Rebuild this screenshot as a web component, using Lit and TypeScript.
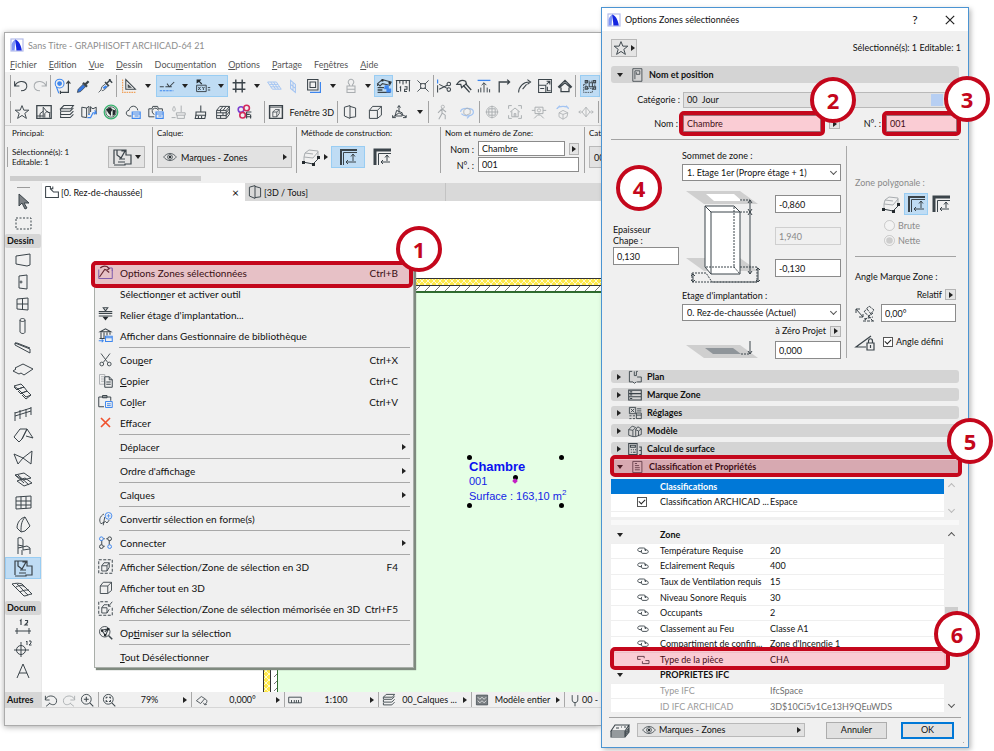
import { LitElement, html, svg, css, nothing, TemplateResult } from "lit";
import { customElement, property } from "lit/decorators.js";
import { classMap } from "lit/directives/class-map.js";

/* Line drawings on a 20 x 20 grid. Classes: b = blue line, g = grey line, f = solid, bf = solid blue. */
const ICONS: Record<string, any> = {
  undo: svg`<path d="M2 4v6h6M2.500 10C5 3 15 3 17 8c1.500 5-2 8-7 8" stroke-width="1.300"/>`,
  redo: svg`<path class="g" d="M18 4v6h-6M17.500 10C15 3 5 3 3 8c-1.500 5 2 8 7 8" stroke-width="1.300"/>`,
  find: svg`<circle class="b" cx="7" cy="7" r="5.500" stroke-width="1.300"/><circle class="bf" cx="7" cy="7" r="3"/><path class="b" d="M3 11l3 8" stroke-width="1.300"/><path d="M8 18h10V4M15.500 7L18 4l2.500 3M8 16v4" stroke-width="1.500"/>`,
  pipette: svg`<path d="M10 6l5 5M13 8l4-4" stroke-width="2.800"/><path d="M3 18l1-4 6-6 3 3-6 6z" fill="#3478e5"/>`,
  syringe: svg`<path d="M10 5l5 5M12 7l5-5M15 2l4 4" stroke-width="1.800"/><path d="M2 18l3-3 1-4 5-4 3 3-5 5-3 1"/><path class="bf" d="M7 12l4-3 2 2-4 3z"/>`,
  setsquare: svg`<path class="o" d="M2 2v16h16" stroke-dasharray="2 1" stroke-width="1.500"/><path d="M6 2v12h12zM9 9v2.500h3z" stroke-width="1.300"/>`,
  guide: svg`<path d="M1 11h5M8 11h8M10 7l3 4 6-6" stroke-width="1.300"/><path class="b" d="M1 16h17" stroke-dasharray="3 1" stroke-width="1.300"/>`,
  tracker: svg`<path class="f" d="M2 2h6L6 4l3 3-1 1-3-3-3 2z"/><path d="M2 9h12v8H2zM4 11l3 4M7 11l-3 4M9 11l1.500 2 1.500-2M10.500 13v2M16 12h3M16 15h3" stroke-width="1.200"/>`,
  grid: svg`<path d="M6 2v16M14 2v16M2 6h16M2 14h16" stroke-width="1.800"/>`,
  plane: svg`<path class="bl" d="M2 5h11l6 9H8zM4 8h11M6 11h11M6 5l6 9M9.500 5l6 9" stroke-width="1.200"/>`,
  vplane: svg`<path class="bl" d="M7 3l6 5v10l-6-5zM10 5.500v10M7 8l6 5" stroke-width="1.300"/>`,
  box: svg`<path d="M2 2h13v13H2zM5 5h7v7H5z" stroke-width="1.300"/><path class="b" d="M5 18h13V5" stroke-width="1.500"/>`,
  stamp: svg`<path class="g" d="M5 10h10v8H5zM8 10V8a3.500 3.500 0 1 1 4 0v2M5 14h10" stroke-width="1.300"/>`,
  roof: svg`<path d="M2 7l6-5 11 3-2 4-9-2-3 3zM2 7v3" stroke-width="1.400"/><circle class="f" cx="8" cy="3" r="1.500"/><circle class="f" cx="17" cy="6" r="1.500"/><path d="M2 12h8M2 15h6M2 18h16" stroke-width="1.800"/><path class="bf" d="M11 9h5v4h3v5h-6v-4h-3z"/>`,
  ruler: svg`<path d="M1 3h18M2 3v14M18 3v14M6 3v4M10 3v5M14 3v4M6 12l1-1v6M12 11h3v3h-3v3h3M2 17h3" stroke-width="1.300"/>`,
  cross: svg`<path d="M3 3l5 5M17 3l-5 5M3 17l5-5M17 17l-5-5M7 7h6v6H7z" stroke-width="1.100"/>`,
  split: svg`<path class="b" d="M2 2v5" stroke-width="1.500"/><path d="M2 9v9M4 8l10 5M4 14l10-5" stroke-width="1.300"/><circle cx="16" cy="7.500" r="2.200" stroke-width="1.300"/><circle cx="16" cy="14.500" r="2.200" stroke-width="1.300"/>`,
  axe: svg`<path d="M1 8c3-5 7-6 11-4l1 3-6 5-1-4z" stroke-width="1.500"/><path d="M9 9l8 9M12 7l7 8" stroke-width="1.700"/>`,
  adjust: svg`<path class="b" d="M2 3h16" stroke-width="1.600"/><path d="M10 18V6M7 9l3-3 3 3M6 12v6M14 12v6M3 14v4M17 14v4" stroke-width="1.200"/>`,
  corner: svg`<path d="M4 18V5h12M14 2l3 3-3 3" stroke-width="1.600"/>`,
  fillet: svg`<path d="M2 18C2 11 8 5 15 5M13 2l4 3-4 3M7 14l5-6" stroke-width="1.300"/>`,
  resize: svg`<path d="M2 2h16v16H2zM2 9h9v9M12 8l4-4M12 4h4v4M4 13h5M13 11v5h4" stroke-width="1.300"/>`,
  house: svg`<path d="M2 11l8-8 8 8-1 1-7-6-7 6zM5 12v5h10v-5" stroke-width="1.600"/>`,
  group: svg`<path d="M5 4h11v9H5zM2 8v10h11v-5M2 8h3" stroke-dasharray="2 1"/><path d="M4 3h3v3H4zM14 3h3v3h-3zM4 11h3v3H4zM14 11h3v3h-3zM9 6h4v5H9z" stroke-width="1.300"/>`,
  star: svg`<path d="M10 2l2.300 5.700h6.200l-5 4 2 6.300L10 14.300 4.500 18l2-6.300-5-4h6.200z" stroke-width="1.200"/>`,
  frame: svg`<path d="M1 2h18v16H1z" stroke-width="1.600"/><path d="M9 17V4l5 6 4 1M5 17v-5l4-3M11 17v-5l3-3 3 3v5M1 15h8" stroke-width="1.200"/>`,
  layers: svg`<path d="M6 2h12l-3 4H2zM2 6v3h12l4-4M2 10v3h12l4-4M2 14v3h12l4-4" stroke-width="1.300"/>`,
  navigator: svg`<path d="M1 4l6 1v12l-6-1zM7 5l3-2v10M12 3v7M12 4l3 2 4-2v9" stroke-width="1.200"/><path class="b" d="M8 17h4l3-6h3M17 8l2 3-3 2M9 13h2" stroke-width="1.400"/>`,
  globe: svg`<circle cx="10" cy="10" r="8.500" stroke="#39b16f" stroke-width="1.600" fill="#e6f3ea"/><circle cx="10" cy="10" r="6.500"/><path class="f" d="M4 7l5-3 3 3-2 3 0 5-3-3zM12 7l4 1-1 5-3 2z"/>`,
  cloud: svg`<path d="M8 15H5c-5-1-4-7 0-7 1-7 10-7 11 0" stroke-width="1.200"/><path class="b" d="M9 10h10v8H9zM9 12.500h10M12 15h5" stroke-width="1.400"/>`,
  camera: svg`<path d="M8 16H1V6h4l1-3h6l1 3h5v3M8 13a4 4 0 1 1 5-5" stroke-width="1.200"/><path class="b" d="M10 10h9v8h-9zM10 12.500h9M13 15h4" stroke-width="1.400"/>`,
  brushdrop: svg`<path class="g" d="M5 3c3 4 1 6 0 6s-3-2 0-6M14 2v8M8 11h11v3H8zM9 14v4h9v-4M2 17h5" stroke-width="1.200"/>`,
  brush: svg`<path d="M11 2v8M5 10h12v4l-1 4H4l1-4zM4 14h13M8 15v3M12 15v3" stroke-width="1.300"/>`,
  bricks: svg`<path d="M2 8h12v10H2zM2 8l4-5h12l-4 5M18 3v10l-4 5M2 11h12l4-5M2 14.500h12l4-5M7 8v3M10 11v3M7 14v4M10 3l-4 5M14 3l-4 5" stroke-width="1.200"/>`,
  detect: svg`<circle cx="5" cy="7" r="3.500" stroke="#7a3fd0" stroke-width="2"/><circle cx="12" cy="5" r="3.500" stroke="#d42a5b" stroke-width="2"/><circle cx="7" cy="14" r="3.500" stroke="#d42a5b" stroke-width="2"/><path d="M12 10h6M12 13h4M12 16h6M12 10v8M17 13v5" stroke-width="1.400"/>`,
  win3d: svg`<path d="M2 2h16v16H2z" stroke-width="1.800"/><path d="M2 4h16M6 10l3-3h5v5l-3 4H6zM6 10h5v6M11 10l3-3"/>`,
  persp: svg`<path d="M3 4l7-2v16l-7-3zM10 3l7 2v11l-7 1" stroke-width="1.200"/>`,
  cube: svg`<path d="M3 8l4-5h11v11l-5 4H3zM3 8h10v10M13 8l5-5" stroke-width="1.200"/>`,
  axo: svg`<path d="M10 10V2M10 11l-8 6M10 11l9 5M8 4.500L10 2l2 2.500M7 8l7 3v4H5zM2 14v3h4M15 17h4v-3" stroke-width="1.200"/>`,
  walk: svg`<circle class="g" cx="11" cy="3.500" r="2"/><path class="g" d="M10 6v6l-4 7M10 11l4 3v5M5 11l5-5 5 4" stroke-width="1.300"/>`,
  orbit: svg`<path class="bl" d="M2 10c0-6 16-6 16 0s-12 6-15 2M14 14l-4 4" stroke-width="1.500"/><path class="g" d="M6 8l4-3 4 2v5l-5 2-3-2z"/>`,
  target: svg`<circle class="g" cx="10" cy="10" r="7"/><path class="g" d="M10 2v16M2 10h16M6 6h8v8H6z" stroke-width="1.200"/>`,
  viewhome: svg`<path class="g" d="M2 6V2h4M14 2h4v4M18 14v4h-4M6 18H2v-4M4 10l6-5 6 5M6 9v7h8V9M9 16v-4h2v4" stroke-width="1.200"/>`,
  projector: svg`<path class="g" d="M5 4h10v8H5zM1 8h4M15 8h4M10 12v3M9 13l-5 5M11 13l5 5" stroke-width="1.200"/><circle class="g" cx="10" cy="8" r="2"/>`,
  orbit2: svg`<path class="bl" d="M3 6c1-4 13-4 14 0M6 2l-4 4M14 2l3 4" stroke-width="1.400"/><path class="g" d="M5 11l5-3 6 3-1 5-5 3-5-3zM5 11l5 2 6-2M10 13v6"/>`,
  diamond: svg`<path class="g" d="M1 10h4l5-6 5 6h4M5 10l5 6 5-6M10 4v12M17 8l2 2-2 2M3 8l-2 2 2 2"/>`,
  zonetool: svg`<path d="M2 17V3h3v5l4 3 4-7h-3V3h4v5h5v9h-6v1H2M5 3h5M7 12h6M6 15h7" stroke-width="1.200"/>`,
  eye: svg`<path d="M2 10c5-6 11-6 16 0-5 6-11 6-16 0z"/><circle cx="10" cy="10" r="3"/><circle class="f" cx="10" cy="10" r="1.500"/>`,
  poly: svg`<path class="g" d="M3 10l1-4 4-3 9 1v8M3 10l9 1 5-6M4 6l8 1M3 10v5"/><path d="M2 15l10 2 6-6"/><path class="f" d="M1 14h3v3H1zM11 16h3v3h-3zM16 9h3v3h-3z"/>`,
  inner: svg`<path d="M3 18V3h16" stroke-width="2"/><path d="M5.500 18V5.500H19"/><path d="M15 7v7M13 9.500L15 7l2 2.500M8 15h10M10 13l-2 2 2 2"/>`,
  outer: svg`<path d="M3 18V3h16" stroke-width="3"/><path d="M6.500 18V6.500H19M15 8v6M13 10.500L15 8l2 2.500M9 15h9M11 13l-2 2 2 2"/>`,
  pointer: svg`<path d="M6 3v12l3-3 3 6 2-1-3-5h5z" fill="#7c8084"/>`,
  marquee: svg`<path d="M3 5h15v11H3z" stroke-dasharray="2 1.500"/>`,
  wall: svg`<path d="M3 6l14-2v11l-3 1-11-2z"/>`,
  door: svg`<path d="M6 4l8-1v14l-8-1z"/><circle cx="8" cy="10" r="1"/>`,
  window: svg`<path d="M4 5l11-1v12l-11-1zM9.500 4v12M4 10h11"/>`,
  column: svg`<path d="M7 4v12c1 2 5 2 5 0V4c0-2-5-2-5 0s5 2 5 0"/>`,
  beam: svg`<path d="M2 5l15 6v4L2 7zM2 5l2 0 13 5"/>`,
  slab: svg`<path d="M0 11l3-2-1-1 8-4 10 5-9 6-3-2-2 1z"/>`,
  stair: svg`<path d="M1 4l7-2 3 3-6 2zM5 7l6-2 3 4-5 2zM9 11l5-2 4 4-5 2zM1 5l3 3 1-1M5 9l3 3 1-1M9 13l4 4 5-4"/>`,
  railing: svg`<path d="M2 17V8M7 15V6M13 13V5M18 11V3M2 9l16-5M2 12l16-5"/>`,
  roofs: svg`<path d="M1 11l6-8h7L9 13l-3 3zM14 3l6 9-7-2M9 13l5-10"/>`,
  shell: svg`<path d="M1 6l9 4 9-7-1 13-8-6-5 6z"/>`,
  skylight: svg`<path d="M2 5l9-2 7 5-8 2zM4 11l8-3 7 5-8 3zM5 5l11 10M2 5l9 8"/>`,
  curtain: svg`<path d="M3 5l15-1v12l-15 1zM8 4.500v12M13 4.500v12M3 9h15M3 13h15"/>`,
  morph: svg`<path d="M4 14c0-6 4-10 8-11l5 9-5 5-4 1zM12 3c-4 5-4 9-4 15M4 14l4 4"/>`,
  object: svg`<path d="M5 2c3-1 4 0 5 2v6l-5-1zM5 9v9M5 12l9-2 3 2v6M9 14v5M10 10v4l7-1"/>`,
  mesh: svg`<path d="M-1 4c4-1 7-1 10 0l10 10c-3 0-5 2-8 2C7 12 3 8-1 4zM3 7c4-2 6-2 9 0M7 12c3-2 6-2 9-2M4 4c4 3 6 7 11 11"/>`,
  dim: svg`<path d="M2 14h16M4 11v6M16 11v6"/><path d="M7 4l1-1v5M12 3.500h2.500v2L12 8h3" stroke-width="1.200"/>`,
  level: svg`<circle cx="8" cy="11" r="4.500"/><path d="M8 3v15M1 11h15"/><path d="M13 3l1-1v4M16 2h2v2l-2 2h2.500"/>`,
  text: svg`<path d="M4 17L10 3l6 14M6 12h8"/>`,
  label: svg`<path d="M5 18l3-6 3 6M13 17l2-4v5"/>`,
  hammer: svg`<path d="M1 6v12h18V6M13 4h6v4" stroke="#6a6fd0" stroke-width="1.300"/><path d="M3 4c3-3 6-3 9-2l3 3-3 2-3-1-7 10M10 6l5 4" stroke="#4d3138" stroke-width="1.500"/>`,
  story: svg`<path d="M1 6h18M1 8.500h18M7 1h6l-3 4zM1 12h18" stroke-width="1.400"/><path class="f" d="M6 13h8l-4 5z"/>`,
  library: svg`<path d="M3 5l7-4 7 4zM4 6v8M8 6v8M12 6v4M16 6v3M2 14h7" stroke-width="1.400"/><path class="b" d="M10 11h9v7h-9zM10 13h9M1 17h6M5 15l2 2-2 2" stroke-width="1.400"/>`,
  cut: svg`<path d="M4 2l9 12M16 2L7 14" stroke-width="1.200"/><circle cx="5" cy="16" r="2.500" stroke-width="1.200"/><circle cx="15" cy="16" r="2.500" stroke-width="1.200"/>`,
  copy: svg`<path class="g" d="M2 2h7v13H2zM4 5h4M4 8h4M4 11h4" stroke-width="1.200"/><path d="M9 5h6l4 4v10H9zM15 5v4h4M11 12h6M11 15h6" stroke-width="1.300"/>`,
  paste: svg`<path d="M8 17H1V4h16v5M6 5V2h6v3z" stroke-width="1.300"/><path class="b" d="M10 10h9v8h-9zM12 13h5M12 15.500h5" stroke-width="1.300"/>`,
  del: svg`<path d="M4 4l12 12M16 4L4 16" stroke="#f0512d" stroke-width="2.200"/>`,
  convert: svg`<path d="M8 4C2 7 1 13 4 17l6-3 2 2 3-4M9 8L7 19" stroke-width="1.200"/><circle class="b" cx="14" cy="6.500" r="4.500" stroke-width="1.200"/><path class="b" d="M11.500 6.500h5M14 4v5"/>`,
  connect: svg`<path d="M5 7v6M15 7v6M7 5h2M11 5h2M7 15h2" stroke-width="1.300"/><circle class="b" cx="4.500" cy="5" r="2.500" stroke-width="1.300"/><circle cx="4.500" cy="15.500" r="2.500" stroke-width="1.300"/><circle cx="15.500" cy="5" r="2.500" stroke-width="1.300"/><circle class="b" cx="15.500" cy="15.500" r="2.500" stroke-width="1.300"/>`,
  sel3d: svg`<path d="M1 1h18v18H1z" stroke-dasharray="4 2" stroke-width="1.300"/><path d="M5 9l3-4h7v6l-3 5H5zM5 9h7v7M12 9l3-4" stroke-width="1.200"/>`,
  mem3d: svg`<path d="M13 1H1v18h18V8" stroke-dasharray="4 2" stroke-width="1.300"/><path d="M5 9l3-4h5M12 16H5V9h7v7l3-5M19 1l-5 6M14 4v3h3" stroke-width="1.200"/>`,
  optimise: svg`<circle cx="9" cy="9" r="7" stroke-width="1.200"/><path d="M14 14l5 5" stroke-width="2"/><path d="M5 7l9-2-4 9zM9 9l5-4" stroke-width="1.400"/><path class="f" d="M4 6h3v3H4zM12 4h3v3h-3zM8 12h3v3H8z"/>`,
  zoomback: svg`<path d="M2 4v6h6M2 9c4-8 16-5 16 2s-7 7-11 3M8 15l-5 4" stroke-width="1.300"/>`,
  zoomfwd: svg`<path class="g" d="M18 4v6h-6M18 9C14 1 2 4 2 11s7 7 11 3M12 15l5 4" stroke-width="1.300"/>`,
  zoomin: svg`<circle cx="9" cy="9" r="7" stroke-width="1.300"/><path d="M14 14l5 5M5.500 9h7M9 5.500v7" stroke-width="1.500"/>`,
  fit: svg`<circle cx="9" cy="9" r="7" stroke-width="1.300"/><path d="M14 14l5 5M6 8V6h2M10 6h2v2M12 10v2h-2M8 12H6v-2" stroke-width="1.500"/>`,
  rotate: svg`<path d="M2 11l7-6 5 3-6 7zM14 9c4 0 4 5 0 7M12 14l2 3 3-1" stroke-width="1.200"/>`,
  scale: svg`<path d="M1 6h18v8H1zM5 10v4M9 10v4M12 10v4M15 10v4" stroke-width="1.300"/>`,
  model: svg`<path d="M2 3h16v14H2z" fill="#7b8084"/><path d="M4 6l3 3 3-3 3 3 3-3M4 11l3 3 3-3 3 3 3-3" stroke="#fff"/>`,
  pen: svg`<path d="M6 3v7c0 5 8 5 8 0V3M10 14v5" stroke-width="1.300"/>`,
  door2: svg`<path d="M4 1h13v18H4zM7 4h7v5H9V6M7 4v12" stroke-width="1.200"/>`,
  plan: svg`<path d="M6 2H2v15h5M9 2v6h3V2h2M13 10h6v7h-6M7 17l2 2 3-2" stroke-width="1.300"/>`,
  floor: svg`<path d="M2 3h6v3h3V3M2 3v14h16v-7h-6l-4-4" stroke-width="1.300"/>`,
  tag: svg`<path d="M1 3h18v14H1zM1 8h18M1 12.500h18M3 5.500h3M3 10h3M3 15h3" stroke-width="1.500"/>`,
  settings: svg`<path d="M2 2h9v9H2zM4 4l5 5M9 4l-5 5M13 4h6M13 7h6M2 14h3M7 14h3M2 18h3M7 18h3M12 10h7v8h-7zM12 13h7" stroke-width="1.300"/>`,
  model3: svg`<path d="M1 8l5-5 5 2-4 4v9l-6-2zM1 8l6 1M11 8l3-4 5 3v8l-8 3H7M11 8v10M11 8l4 2v7M15 10l4-3" stroke-width="1.200"/>`,
  calc: svg`<path d="M1 2h12v16H1zM3.500 4.500h7v3h-7zM4 11h1.500M7 11h1.500M10 11h1.500M4 14.500h1.500M7 14.500h4M16 7h3v11h-3M16 12h3" stroke-width="1.500"/>`,
  sheet: svg`<path d="M4 2h13v16H4zM7 5h3M7 8h6M7 11h7M7 14h7" stroke-width="1.200"/>`,
  link: svg`<path d="M8 11H5c-5 0-5-6 0-6h6c4 0 4 3 3 5M8 8c-2 3-1 6 2 6h5c5 0 5-6 0-6h-3" stroke-width="1.500"/>`,
  unlink: svg`<path d="M6 9H1V4h11v3M9 12v4h11v-5h-6" stroke-width="1.500"/>`,
  anglezone: svg`<path d="M1 6l7 8M1 6v4M1 6h4M8 11v3H4"/><path d="M8 18h11M9 9l5-6 5 4-5 6zM12 6l4 5M9 16l9-2M18 10l-8 7M13 13l5 5" stroke-dasharray="3 1"/>`,
  anglelock: svg`<path d="M11 15H1L16 4M12 11h7v7h-7zM13.500 11V9c0-3 4-3 4 0v2M15.500 13v3" stroke-width="1.200"/>`,
  stack: svg`<path d="M1 11l4-6h14l-4 6zM1 11v6h14v-6M15 17l4-5V5M1 13h14l4-5M1 15h14l4-5M6 8h3M11 7h1M14 7h2" stroke-width="1.100"/>`,
  logo: svg`<rect x="0" y="0" width="20" height="20" fill="#fff" stroke="#b4bcea" stroke-width="2"/><path d="M1 19V9C3 4 5 2 8 1c-2 5-1 12-2 18z" fill="#7f95f5" stroke="none"/><path d="M7 1c5 1 10 9 11 18H9C9 13 7 7 7 1z" fill="#1426e0" stroke="none"/>`,
};

const iconStyles = css`
  svg.ic { width: 20px; height: 20px; flex: none; display: block; fill: none; stroke: #3b444a; stroke-width: 1; overflow: visible; }
  svg.s16 { width: 16px; height: 16px; }
  svg.s12 { width: 12px; height: 12px; }
  .b { stroke: #3d86ee; }
  .bl { stroke: #a3c4f2; }
  .g { stroke: #a9adb0; }
  .o { stroke: #f0a25c; }
  .f { fill: #23292d; stroke: none; }
  .bf { fill: #3d86ee; stroke: none; }
`;

const base = css`
  * { box-sizing: border-box; }
  button, input, select { font: inherit; color: inherit; margin: 0; padding: 0; border-radius: 0; }
  button { background: none; border: 0; display: flex; align-items: center; justify-content: center; }
  .caret { display: block; width: 0; height: 0; border: 3px solid transparent; border-top: 4px solid #222; border-bottom: 0; flex: none; }
  .right { display: block; width: 0; height: 0; border: 3px solid transparent; border-left: 4px solid #222; border-right: 0; flex: none; }
  .field { background: #fff; border: 1px solid #8b8b8b; padding: 0 3px; min-width: 0; }
  .mini { width: 11px; height: 11px; flex: none; background: #e4e4e4; border: 1px solid #b4b4b4; }
`;

const icon = (name: string, size = "") =>
  svg`<svg class="ic ${size}" viewBox="0 0 20 20" aria-hidden="true">${ICONS[name]}</svg>`;

const tool = (name: string, label = name) => html`<button class="tool" title=${label}>${icon(name, "s16")}</button>`;
const drop = html`<button class="drop" title="Plus"><i class="caret"></i></button>`;

/* Numbered circle laid over the control it explains. */
@customElement("step-mark")
class StepMark extends LitElement {
  @property({ type: Number }) n = 0;
  static styles = css`
    :host { display: grid; place-items: center; position: absolute; box-sizing: border-box; width: 46px; height: 46px; border: 4px solid #c4071c;
      border-radius: 50%; background: #fff; color: #c4071c; font: bold 22px/38px "Open Sans", sans-serif; z-index: 5; }
  `;
  render() { return html`<span>${this.n}</span>`; }
}

interface Entry { label?: TemplateResult | string; icon?: string; key?: string; sub?: boolean; sep?: boolean; hot?: boolean; }
const SEP: Entry = { sep: true };

@customElement("context-menu")
class ContextMenu extends LitElement {
  private entries: Entry[] = [
    { label: "Options Zones sélectionnées", icon: "hammer", key: "Ctrl+B", hot: true },
    { label: html`Sélection<u>n</u>er et activer outil` },
    { label: "Relier étage d'implantation...", icon: "story" },
    { label: "Afficher dans Gestionnaire de bibliothèque", icon: "library" },
    SEP,
    { label: html`Cou<u>p</u>er`, icon: "cut", key: "Ctrl+X" },
    { label: html`<u>C</u>opier`, icon: "copy", key: "Ctrl+C" },
    { label: html`Co<u>l</u>ler`, icon: "paste", key: "Ctrl+V" },
    { label: "Effacer", icon: "del" },
    SEP, { label: "Déplacer", sub: true },
    SEP, { label: "Ordre d'affichage", sub: true },
    SEP, { label: "Calques", sub: true },
    SEP, { label: "Convertir sélection en forme(s)", icon: "convert" },
    SEP, { label: "Connecter", icon: "connect", sub: true },
    SEP,
    { label: "Afficher Sélection/Zone de sélection en 3D", icon: "sel3d", key: "F4" },
    { label: "Afficher tout en 3D", icon: "cube" },
    { label: "Afficher Sélection/Zone de sélection mémorisée en 3D", icon: "mem3d", key: "Ctrl+F5" },
    SEP, { label: html`Op<u>t</u>imiser sur la sélection`, icon: "optimise" },
    SEP, { label: html`<u>T</u>out Désélectionner` },
  ];
  static styles = [iconStyles, base, css`
    :host { display: block; box-sizing: border-box; background: #f0f0f0; border: 1px solid #a9aea9; box-shadow: 2px 2px 1px #7f8a7f; padding: 0 3px; font-size: 10px; color: #111; }
    .row { display: grid; grid-template-columns: 22px 1fr auto 12px; align-items: center; width: 100%; height: 21px; text-align: left; position: relative; white-space: nowrap; }
    .row .right { justify-self: center; }
    .row svg { width: 15px; height: 15px; }
    .sep { height: 1px; margin: 1px 0 1px 21px; border: 0; background: #a8a8a8; }
    .frame { position: absolute; inset: -1px -3px -5px -7px; border: 4px solid #c4071c; border-radius: 5px; background: #c4071c33; pointer-events: none; }
    step-mark { right: -32px; top: -36px; }
  `];
  render() {
    return html`${this.entries.map(e => e.sep ? html`<hr class="sep">` : html`
      <button class="row">
        <span>${e.icon ? icon(e.icon, "s16") : nothing}</span><span>${e.label}</span><span>${e.key ?? ""}</span>
        ${e.sub ? html`<i class="right"></i>` : html`<span></span>`}
        ${e.hot ? html`<i class="frame"></i><step-mark .n=${1}></step-mark>` : nothing}
      </button>`)}`;
  }
}

@customElement("plan-window")
class PlanWindow extends LitElement {
  static styles = [iconStyles, base, css`
    :host { display: flex; flex-direction: column; min-width: 0; background: #f0f0f0; border: 1px solid #ababab; border-right: 0;
      box-shadow: 0 1px 6px #00000055; font-size: 9px; color: #111; white-space: nowrap; position: relative; }
    .title { display: flex; align-items: center; gap: 5px; height: 24px; padding-left: 6px; background: #fff; color: #8d8d8d; }
    .menus { display: flex; gap: 12px; height: 15px; line-height: 15px; padding-left: 5px; background: #fff; }
    .menus a { color: #555; text-decoration: none; }
    .bar { display: grid; overflow: hidden; }
    .one { grid-template-columns: 5px 40px 66px 40px 72px 36px 38px 38px 34px 19px 40px 142px 5px 20px; height: 27px; align-items: center; }
    .two { grid-template-columns: 5px 254px 73px 91px 51px 119px 5px; height: 27px; align-items: center; border-bottom: 1px solid #d0d0d0; }
    .grp { display: flex; justify-content: space-around; align-items: center; height: 22px; min-width: 0; }
    .ln { border-left: 1px solid #a3a3a3; }
    .long { padding-right: 8px; }
    .on { background: #bfdcf4; outline: 1px solid #99cdf3; outline-offset: -1px; }
    .tool { width: 18px; height: 20px; }
    .drop { width: 10px; height: 20px; }
    .info { display: grid; grid-template-columns: 147px 144px 144px 144px 1fr; height: 48px; overflow: hidden; padding-top: 1px; }
    .panel { display: flex; flex-direction: column; height: 46px; padding: 0 4px; border-left: 1px solid #a3a3a3; min-width: 0; }
    .panel:first-child { border: 0; padding-left: 7px; }
    .panel > header { height: 14px; font-size: 8px; line-height: 13px; }
    .line { display: flex; align-items: center; gap: 3px; flex: 1; }
    .count { font-size: 8px; line-height: 10px; width: 98px; border-left: 1px solid #a3a3a3; margin-left: -5px; padding-left: 4px; }
    .zbtn { width: 37px; height: 22px; border: 1px solid #b9b9b9; background: #e4e4e4; gap: 3px; }
    .layer { width: 136px; height: 22px; border: 1px solid #b9b9b9; background: #e2e2e2; gap: 3px; padding: 0 4px; justify-content: flex-start; }
    .layer span { flex: 1; text-align: left; }
    .meth { width: 34px; height: 22px; }
    .meth + .meth { margin-left: -3px; }
    .fields { display: grid; grid-template-columns: 29px 1fr 10px; align-items: center; column-gap: 4px; padding-right: 1px; }
    .fields label { text-align: right; }
    .fields input { height: 15px; margin-bottom: 1px; }
    .fields .wide { grid-column: 2 / 4; }
    .fields .mini { width: 10px; height: 12px; }
    .scroll { height: 9px; padding: 2px 0 2px 5px; }
    .scroll i { display: block; width: 191px; height: 5px; background: #cdcdcd; }
    .work { flex: 1; display: grid; grid-template-columns: 37px 1fr; min-height: 0; }
    .side { display: flex; flex-direction: column; align-items: center; padding-top: 4px; height: 509px; overflow: hidden; border-right: 1px solid #e8e8e8; }
    .grip { width: 13px; height: 1px; background: #9b9b9b; margin-bottom: 2px; flex: none; }
    .side h4 { width: 100%; margin: 0 0 1px; height: 14px; flex: none; font-size: 9px; line-height: 14px; background: #d6d6d6; padding-left: 2px; border-radius: 2px; }
    .t { width: 100%; height: 22px; flex: none; }
    .doc { display: flex; flex-direction: column; min-width: 0; }
    .tabs { display: grid; grid-template-columns: 203px 201px 1fr; height: 18px; background: #d9d9d9; flex: none; }
    .tab { display: flex; align-items: center; gap: 1px; padding-left: 2px; }
    .tab.cur { background: #fff; }
    .tab .x { margin-left: auto; margin-right: 6px; font-size: 12px; }
    .tab + .tab { border-right: 1px solid #c3c3c3; }
    .canvas { position: relative; flex: 1; min-height: 491px; background: #fff; overflow: hidden; }
    .room { position: absolute; left: 221px; top: 77px; right: 0; bottom: 0; }
    .room svg { width: 100%; height: 100%; display: block; }
    .zone { position: absolute; left: 427px; top: 256px; width: 93px; height: 49px; color: #1424e6; font: 11px/15px "Liberation Sans", Arial, sans-serif; padding-top: 2px; }
    .zone b { display: block; font-size: 13px; line-height: 15px; color: #0a12f0; }
    .zone sup { font-size: 8px; line-height: 0; }
    .dot { position: absolute; width: 5px; height: 5px; border-radius: 50%; background: #000; }
    .tl { left: -2px; top: -2px; } .tr { right: -2px; top: -2px; } .bl2 { left: -2px; bottom: -2px; } .br { right: -2px; bottom: -2px; }
    .mid { left: 44px; top: 18px; }
    .dia { position: absolute; left: 44px; top: 22px; width: 4px; height: 4px; background: #c41fc4; transform: rotate(45deg); }
    context-menu { position: absolute; left: 89px; top: 228px; width: 320px; }
    .status { display: grid; grid-template-columns: 37px 56px 93px 93px 94px 93px 93px 1fr; height: 16px; align-items: center; overflow: hidden; border-bottom: 1px solid #d6d6d6; }
    .status h4 { margin: 0; height: 15px; font-size: 9px; line-height: 15px; background: #d6d6d6; padding-left: 2px; }
    .st { display: flex; align-items: center; height: 15px; border-left: 1px solid #a9a9a9; padding: 0 4px 0 3px; min-width: 0; }
    .st svg { width: 14px; height: 14px; }
    .st span { flex: 1; text-align: center; }
    .st.first { border: 0; justify-content: space-between; padding: 0 4px 0 2px; }
    .foot { height: 17px; }
  `];

  private side = ["wall", "door", "window", "column", "beam", "slab", "stair", "railing", "roofs", "shell", "skylight", "curtain", "morph", "object", "zonetool", "mesh"];

  render() {
    return html`
      <div class="title">${icon("logo", "s12")}<span>Sans Titre - GRAPHISOFT ARCHICAD-64 21</span></div>
      <nav class="menus">
        <a href="#"><u>F</u>ichier</a><a href="#"><u>E</u>dition</a><a href="#"><u>V</u>ue</a><a href="#"><u>D</u>essin</a>
        <a href="#">Docu<u>m</u>entation</a><a href="#"><u>O</u>ptions</a><a href="#"><u>P</u>artage</a><a href="#">Fe<u>n</u>êtres</a><a href="#"><u>A</u>ide</a>
      </nav>
      <div class="bar one">
        <i></i>
        <div class="grp ln">${tool("undo")}${tool("redo")}</div>
        <div class="grp ln">${tool("find")}${tool("pipette")}${tool("syringe")}</div>
        <div class="grp ln">${tool("setsquare")}${drop}</div>
        <div class="grp on">${tool("guide")}${drop}${tool("tracker")}${drop}</div>
        <div class="grp">${tool("grid")}${drop}</div>
        <div class="grp">${tool("plane")}${tool("vplane")}</div>
        <div class="grp">${tool("box")}${drop}</div>
        <div class="grp">${tool("stamp")}${drop}</div>
        <div class="grp on">${tool("roof")}</div>
        <div class="grp">${tool("ruler")}${tool("cross")}</div>
        <div class="grp ln">${["split", "axe", "adjust", "corner", "fillet", "resize", "house"].map(n => tool(n))}</div>
        <div class="grp ln"></div>
        <div class="grp on">${tool("group")}</div>
      </div>
      <div class="bar two">
        <i></i>
        <div class="grp ln long">${["star", "frame", "layers", "navigator", "globe", "cloud", "camera", "brushdrop", "brush", "bricks", "detect"].map(n => tool(n))}</div>
        <button class="grp ln">${icon("win3d", "s16")}Fenêtre 3D</button>
        <div class="grp ln">${tool("persp")}${tool("cube")}${tool("axo")}${drop}</div>
        <div class="grp ln">${tool("walk")}${tool("orbit")}</div>
        <div class="grp ln">${["target", "viewhome", "projector", "orbit2", "diamond"].map(n => tool(n))}</div>
        <div class="grp ln"></div>
      </div>
      <div class="info">
        <section class="panel"><header>Principal:</header>
          <div class="line"><div class="count">Sélectionné(s): 1<br>Editable: 1</div>
            <button class="zbtn" title="Zone">${icon("zonetool")}<i class="caret"></i></button></div></section>
        <section class="panel"><header>Calque:</header>
          <div class="line"><button class="layer">${icon("eye", "s16")}<span>Marques - Zones</span><i class="right"></i></button></div></section>
        <section class="panel"><header>Méthode de construction:</header>
          <div class="line"><button title="Polygonale">${icon("poly")}</button><i class="right"></i>
            <button class="meth on" title="Intérieure">${icon("inner")}</button><button class="meth" title="Extérieure">${icon("outer")}</button></div></section>
        <section class="panel"><header>Nom et numéro de Zone:</header>
          <div class="fields"><label for="zn">Nom :</label><input id="zn" class="field" value="Chambre"><button class="mini" title="Choisir"><i class="right"></i></button>
            <label for="zi">N°. :</label><input id="zi" class="field wide" value="001"></div></section>
        <section class="panel"><header>Caté</header><div class="line"><button class="layer">00</button></div></section>
      </div>
      <div class="scroll"><i></i></div>
      <div class="work">
        <div class="side">
          <i class="grip"></i>
          <button class="t" title="Flèche">${icon("pointer")}</button><button class="t" title="Rectangle">${icon("marquee")}</button>
          <h4>Dessin</h4>
          ${this.side.map(n => html`<button class=${classMap({ t: true, on: n === "zonetool" })} title=${n}>${icon(n)}</button>`)}
          <h4>Docum</h4>
          ${["dim", "level", "text", "label"].map(n => html`<button class="t" title=${n}>${icon(n)}</button>`)}
        </div>
        <div class="doc">
          <div class="tabs">
            <div class="tab cur">${icon("floor", "s16")}<span>[0. Rez-de-chaussée]</span><button class="x" title="Fermer">×</button></div>
            <div class="tab">${icon("persp", "s16")}<span>[3D / Tous]</span></div>
          </div>
          <div class="canvas">
            <div class="room"><svg>
              <defs>
                <pattern id="ins" width="6" height="6" patternUnits="userSpaceOnUse"><rect width="6" height="6" fill="#ffe94a"/><path d="M0 0l3 3 3-3M0 6l3-3 3 3" stroke="#fffbd0" fill="none"/></pattern>
                <pattern id="hat" width="10" height="7" patternUnits="userSpaceOnUse"><rect width="10" height="7" fill="#fff"/><path d="M1 7L8 0" stroke="#777"/></pattern>
              </defs>
              <rect width="100%" height="100%" fill="#333"/>
              <rect x="1" y="1" width="100%" height="100%" fill="url(#ins)"/>
              <rect x="7" y="7" width="100%" height="100%" fill="#333"/>
              <rect x="8" y="8" width="100%" height="100%" fill="url(#hat)"/>
              <rect x="14" y="13" width="100%" height="100%" fill="#2e6b2e"/>
              <rect x="15" y="15" width="100%" height="100%" fill="#e5ffe5"/>
            </svg></div>
            <div class="zone"><b>Chambre</b>001<br>Surface : 163,10 m<sup>2</sup>
              <i class="dot tl"></i><i class="dot tr"></i><i class="dot bl2"></i><i class="dot br"></i><i class="dot mid"></i><i class="dia"></i></div>
          </div>
        </div>
      </div>
      <div class="status">
        <h4>Autres</h4>
        <div class="st first">${icon("zoomback", "s16")}${icon("zoomfwd", "s16")}${icon("zoomin", "s16")}</div>
        <div class="st">${icon("fit", "s16")}<span>79%</span><i class="right"></i></div>
        <div class="st">${icon("rotate", "s16")}<span>0,000°</span><i class="right"></i></div>
        <div class="st">${icon("scale", "s16")}<span>1:100</span><i class="right"></i></div>
        <div class="st">${icon("layers", "s16")}<span>00_Calques ...</span><i class="right"></i></div>
        <div class="st">${icon("model", "s16")}<span>Modèle entier</span><i class="right"></i></div>
        <div class="st">${icon("pen", "s16")}<span>00 -</span></div>
      </div>
      <div class="foot"></div>
      <context-menu></context-menu>`;
  }
}

const PROPS: [string, string][] = [
  ["Température Requise", "20"], ["Eclairement Requis", "400"], ["Taux de Ventilation requis", "15"], ["Niveau Sonore Requis", "30"],
  ["Occupants", "2"], ["Classement au Feu", "Classe A1"], ["Compartiment de confin...", "Zone d'Incendie 1"], ["Type de la pièce", "CHA"],
];

@customElement("zone-dialog")
class ZoneDialog extends LitElement {
  static styles = [iconStyles, base, css`
    :host { display: block; box-sizing: border-box; background: #f0f0f0; border: 1px solid #4b94d2; box-shadow: 2px 2px 5px #00000044; font-size: 9px; line-height: 12px; color: #111; white-space: nowrap; position: relative; }
    .title { display: flex; align-items: center; gap: 5px; height: 23px; background: #fff; padding: 0 12px 0 6px; }
    .title span { flex: 1; }
    .title button { width: 12px; margin-left: 18px; font-size: 12px; }
    .title svg.close { stroke: #222; stroke-width: 2; }
    .body { padding: 0 9px; }
    .top { display: flex; justify-content: space-between; align-items: center; height: 33px; margin: 0 -2px 2px 0; }
    .fav { width: 26px; height: 18px; border: 1px solid #b9b9b9; background: #e4e4e4; gap: 2px; }
    .fav .ic { width: 16px; }
    .acc { display: flex; align-items: center; width: 348px; max-width: 100%; height: 13px; margin-bottom: 5px; background: #d4d4d4; border-radius: 3px; justify-content: flex-start; font-weight: bold; padding-left: 6px; position: relative; }
    .acc i:first-child { margin-right: 6px; }
    .acc svg { margin-right: 4px; height: 14px; }
    .acc.big { height: 17px; margin-bottom: 9px; }
    .frame { position: absolute; inset: -4px; border: 4px solid #c4071c; border-radius: 5px; background: #e6002633; pointer-events: none; }
    .acc .frame { inset: -5px -3px -4px -1px; margin: 0; }
    .wrap { position: relative; display: grid; }
    .wrap input { width: 100%; }
    .cat { display: grid; grid-template-columns: 69px 1fr; column-gap: 3px; align-items: center; margin-right: 3px; }
    .cat label, .names label { text-align: right; }
    .cat select { height: 16px; border: 1px solid #b9b9b9; background: #e2e2e2; padding: 0 3px; }
    select { appearance: none; width: 100%; }
    .wrap .patch { position: absolute; right: 13px; top: 2px; bottom: 2px; width: 12px; background: #b7cff3; }
    .names { display: grid; grid-template-columns: 67px 138px 15px 1fr 71px; column-gap: 5px; align-items: center; margin: 7px 2px 7px 0; }
    .names .mini { margin-left: 3px; }
    .names input { height: 17px; }
    hr { border: 0; margin: 0; height: 1px; background: #a3a3a3; }
    .geo { display: grid; grid-template-columns: 67px 158px 1fr; padding: 6px 3px 0 2px; height: 230px; }
    .eps { display: grid; align-content: start; padding-top: 78px; line-height: 11px; }
    .field { height: 18px; width: 66px; }
    .eps .field { margin-top: 1px; }
    .mid { display: grid; align-content: start; padding-left: 2px; margin-right: -3px; }
    .mid > label { height: 18px; line-height: 19px; }
    .combo { position: relative; }
    .combo select { background: #fff; border: 1px solid #8b8b8b; height: 17px; padding: 0 4px; display: block; }
    .combo::after { content: ""; position: absolute; right: 5px; top: 5px; width: 4px; height: 4px; border: solid #555; border-width: 0 1px 1px 0; transform: rotate(45deg); }
    .fig { display: grid; grid-template-columns: 1fr 66px; height: 105px; align-items: start; }
    .fig svg { width: 84px; height: 100px; display: block; margin-top: 4px; }
    .vals { display: grid; gap: 14px; padding-top: 14px; }
    .vals input:disabled { background: #f0f0f0; border-color: #cfcfcf; color: #8a8a8a; }
    .zero { display: grid; grid-template-columns: 1fr 66px; align-items: end; height: 38px; }
    .zero svg { width: 84px; height: 18px; display: block; grid-row: 1 / 3; align-self: end; }
    .lab { display: flex; justify-content: flex-end; align-items: center; gap: 4px; height: 16px; }
    .ang { border-left: 1px solid #a9a9a9; margin: 0 0 12px 8px; padding: 31px 0 0 8px; display: flex; flex-direction: column; }
    .ang .dim { color: #8a8a8a; }
    .kinds { display: flex; justify-content: flex-end; gap: 3px; height: 20px; margin: 5px 4px 4px 0; }
    .kinds button { width: 22px; }
    .kinds .on { background: #bfdcf4; outline: 1px solid #99cdf3; }
    .ang label { display: flex; align-items: center; gap: 3px; height: 15px; }
    .rad { padding-left: 29px; }
    .ang input[type="radio"] { width: 11px; height: 11px; }
    .ang hr { margin: 8px 0 14px; }
    .ang .rel2 { height: 20px; padding-top: 3px; }
    .arow { display: flex; justify-content: space-between; align-items: center; }
    .arow .field { width: 75px; }
    .def { display: flex; align-items: center; gap: 8px; margin-top: 9px; }
    .tick { appearance: none; width: 10px; height: 10px; border: 1px solid #555; background: #fff; display: grid; place-items: center; }
    .tick:checked::after { content: ""; width: 5px; height: 3px; border: solid #222; border-width: 0 0 1px 1px; transform: rotate(-45deg); margin-top: -2px; }
    .lists { margin-top: 6px; width: 348px; max-width: 100%; }
    .list { display: grid; grid-template-columns: 1fr 15px; }
    table { border-collapse: collapse; width: 100%; table-layout: fixed; background: #fff; }
    col.c1 { width: 26px; } col.c2 { width: 23px; } col.c3 { width: 110px; }
    td, th { padding: 0; text-align: left; line-height: 14px; border-bottom: 1px solid #efefef; }
    .blue th { background: #0078d7; color: #fff; border: 0; height: 15px; }
    .cls { height: 38px; overflow: hidden; background: #fff; }
    .cls td { height: 17px; }
    .strip { height: 5px; margin: 3px 0 3px; background: #f8f8f8; }
    .props { height: 184px; overflow: hidden; }
    .props table { height: 187px; }
    .props tr.h th { background: #f0f0f0; }
    .props tr.off td { color: #9a9a9a; }
    .props tr.off td:last-child { color: #707070; }
    th .caret { margin-left: 6px; }
    .bar { display: flex; flex-direction: column; justify-content: space-between; align-items: center; padding: 5px 0; position: relative; }
    .chev { width: 5px; height: 5px; border: solid #555; border-width: 1px 0 0 1px; transform: rotate(45deg); }
    .chev.dn { transform: rotate(225deg); }
    .pale .chev { border-color: #b9b9b9; }
    .thumb { position: absolute; top: 79px; left: 1px; right: 1px; height: 22px; background: #cdcdcd; }
    .rel { position: relative; }
    .type { position: absolute; left: -1px; right: -6px; top: 119px; height: 23px; border: 4px solid #c4071c; border-radius: 5px; background: #e6002633; pointer-events: none; }
    .foot { display: flex; align-items: center; margin: 5px 7px 0; height: 30px; border-top: 1px solid #a3a3a3; padding: 0 7px 5px 1px; position: relative; }
    .foot .lay { flex: 1; max-width: 170px; height: 14px; margin: 0 21px 0 7px; border: 1px solid #b9b9b9; background: #e2e2e2; padding: 0 3px; gap: 2px; }
    .lay span { flex: 1; text-align: left; }
    .push { width: 61px; height: 17px; border: 1px solid #adadad; background: #e1e1e1; margin-right: 14px; }
    .push.ok { width: 53px; border: 2px solid #0078d7; margin-right: 0; }
    .m2 { right: 112px; top: 69px; } .m3 { right: -22px; top: 68px; } .m4 { left: 14px; top: 157px; }
    .m5 { right: -25px; top: 410px; } .m6 { right: -12px; top: 603px; }
    .grip { position: absolute; right: 2px; bottom: 2px; width: 7px; height: 7px; background: radial-gradient(circle, #aaa 1px, transparent 1px) 0 0 / 3px 3px; clip-path: polygon(100% 0, 100% 100%, 0 100%); }
  `];

  private acc(ic: string, text: string) {
    return html`<button class="acc"><i class="right"></i>${icon(ic, "s16")}${text}</button>`;
  }

  render() {
    return html`
      <div class="title">${icon("logo", "s12")}<span>Options Zones sélectionnées</span><button title="Aide">?</button>
        <button title="Fermer"><svg class="ic s12 close" viewBox="0 0 20 20"><path d="M3 3l14 14M17 3L3 17"/></svg></button></div>
      <div class="body">
        <div class="top"><button class="fav" title="Favoris">${icon("star")}<i class="right"></i></button><span>Sélectionné(s): 1 Editable: 1</span></div>
        <button class="acc big"><i class="caret"></i>${icon("door2", "s16")}Nom et position</button>
        <div class="cat"><label for="cat">Catégorie :</label><div class="wrap"><select id="cat"><option>00&nbsp; Jour</option></select><i class="patch"></i></div></div>
        <div class="names">
          <label for="nom">Nom :</label><div class="wrap"><input id="nom" class="field" value="Chambre"><i class="frame"></i></div>
          <button class="mini" title="Choisir"><i class="right"></i></button>
          <label for="num">N°. :</label><div class="wrap"><input id="num" class="field" value="001"><i class="frame"></i></div>
        </div>
        <hr>
        <div class="geo">
          <div class="eps"><label for="eps">Epaisseur<br>Chape :</label><input id="eps" class="field" value="0,130"></div>
          <div class="mid">
            <label for="top">Sommet de zone :</label>
            <div class="combo"><select id="top"><option>1. Etage 1er (Propre étage + 1)</option></select></div>
            <div class="fig">
              <svg viewBox="0 0 84 100" fill="none" stroke="#3b444a">
                <path d="M4 6h54l18 13H22z" fill="#cfcfcf" stroke="none"/><path d="M24 9h28l8 7H32z" fill="#fff" stroke="none"/>
                <path d="M4 73h54l18 13H22z" fill="#cfcfcf" stroke="none"/>
                <path d="M23 21h29l6 6v62H29l-6-7z" fill="#fff"/><path d="M23 21l6 6v62M29 27h29" />
                <path d="M52 22v60M24 82h30M58 15h10M58 27h10M52 82l6 7" stroke-dasharray="2 1"/>
                <path d="M68 15v74M66 18l2-3 2 3M66 24l2 3 2-3M66 30l2-3 2 3M66 86l2 3 2-3"/>
                <path d="M10 88h14l6 9h45V82M58 82h17M10 88v9h65" stroke-dasharray="2 1"/><path d="M11 89v8M9 91l2-2 2 2M9 95l2 2 2-2M76 83v14M74 85l2-2 2 2M74 95l2 2 2-2"/>
              </svg>
              <div class="vals"><input class="field" aria-label="Décalage haut" value="-0,860"><input class="field" aria-label="Hauteur" value="1,940" disabled><input class="field" aria-label="Décalage bas" value="-0,130"></div>
            </div>
            <label for="home">Etage d'implantation :</label>
            <div class="combo"><select id="home"><option>0. Rez-de-chaussée (Actuel)</option></select></div>
            <div class="zero">
              <svg viewBox="0 0 84 18" fill="none" stroke="#3b444a"><path d="M4 4h54l18 13H22z" fill="#cfcfcf" stroke="none"/><path d="M23 7h28l8 6H31z" fill="#8f959a" stroke="none"/><path d="M59 13h9" stroke-dasharray="2 1"/><path d="M68 0v13M66 10l2 3 2-3"/></svg>
              <label class="lab" for="zero">à Zéro Projet<button class="mini" title="Choisir"><i class="right"></i></button></label>
              <input id="zero" class="field" value="0,000">
            </div>
          </div>
          <div class="ang">
            <span class="dim">Zone polygonale :</span>
            <div class="kinds"><button title="Polygone">${icon("poly")}</button><button class="on" title="Intérieure">${icon("inner")}</button><button title="Extérieure">${icon("outer")}</button></div>
            <label class="rad dim"><input type="radio" name="k" disabled>Brute</label>
            <label class="rad dim"><input type="radio" name="k" checked disabled>Nette</label>
            <hr>
            <span>Angle Marque Zone :</span>
            <label class="lab rel2" for="angle">Relatif<button class="mini" title="Choisir"><i class="right"></i></button></label>
            <div class="arow">${icon("anglezone")}<input id="angle" class="field" value="0,00°"></div>
            <div class="def">${icon("anglelock")}<label><input type="checkbox" class="tick" checked>Angle défini</label></div>
          </div>
        </div>
        ${this.acc("plan", "Plan")}${this.acc("tag", "Marque Zone")}${this.acc("settings", "Réglages")}${this.acc("model3", "Modèle")}${this.acc("calc", "Calcul de surface")}
        <button class="acc"><i class="caret"></i>${icon("sheet", "s16")}Classification et Propriétés<i class="frame"></i></button>
        <div class="lists">
          <div class="list pale">
            <div class="cls"><table><colgroup><col class="c1"><col class="c2"><col class="c3"><col></colgroup>
              <tr class="blue"><th></th><th></th><th colspan="2">Classifications</th></tr>
              <tr><td></td><td><input class="tick" type="checkbox" checked aria-label="Classification ARCHICAD"></td><td>Classification ARCHICAD ...</td><td>Espace</td></tr>
            </table></div>
            <div class="bar"><i class="chev"></i><i class="chev dn"></i></div>
          </div>
          <div class="strip"></div>
          <div class="list rel">
            <div class="rel"><div class="props"><table><colgroup><col class="c1"><col class="c2"><col class="c3"><col></colgroup>
              <tr class="h"><th><i class="caret"></i></th><th></th><th colspan="2">Zone</th></tr>
              ${PROPS.map(([k, v], i) => html`<tr><td></td><td>${icon(i === 7 ? "unlink" : "link", "s12")}</td><td>${k}</td><td>${v}</td></tr>`)}
              <tr class="h"><th><i class="caret"></i></th><th></th><th colspan="2">PROPRIETES IFC</th></tr>
              <tr class="off"><td></td><td></td><td>Type IFC</td><td>IfcSpace</td></tr>
              <tr class="off"><td></td><td></td><td>ID IFC ARCHICAD</td><td>3D$10Ci5v1Ce13H9QEuWDS</td></tr>
            </table></div><i class="type"></i></div>
            <div class="bar"><i class="chev"></i><i class="thumb"></i><i class="chev dn"></i></div>
          </div>
        </div>
      </div>
      <div class="foot">${icon("stack")}<button class="lay">${icon("eye", "s16")}<span>Marques - Zones</span><i class="right"></i></button>
        <button class="push">Annuler</button><button class="push ok">OK</button></div>
      <i class="grip"></i>
      <step-mark class="m2" .n=${2}></step-mark><step-mark class="m3" .n=${3}></step-mark><step-mark class="m4" .n=${4}></step-mark>
      <step-mark class="m5" .n=${5}></step-mark><step-mark class="m6" .n=${6}></step-mark>`;
  }
}

@customElement("app-root")
class AppRoot extends LitElement {
  static styles = css`
    :host { display: grid; grid-template-columns: minmax(0, 1fr) 368px; align-items: start; padding: 7px 25px 3px 4px; background: #fff;
      font-family: Lato, "Open Sans", sans-serif; font-size: 10px; line-height: normal; overflow: hidden; }
    plan-window { margin-top: 25px; }
    zone-dialog { z-index: 2; }
  `;
  render() { return html`<plan-window></plan-window><zone-dialog></zone-dialog>`; }
}
